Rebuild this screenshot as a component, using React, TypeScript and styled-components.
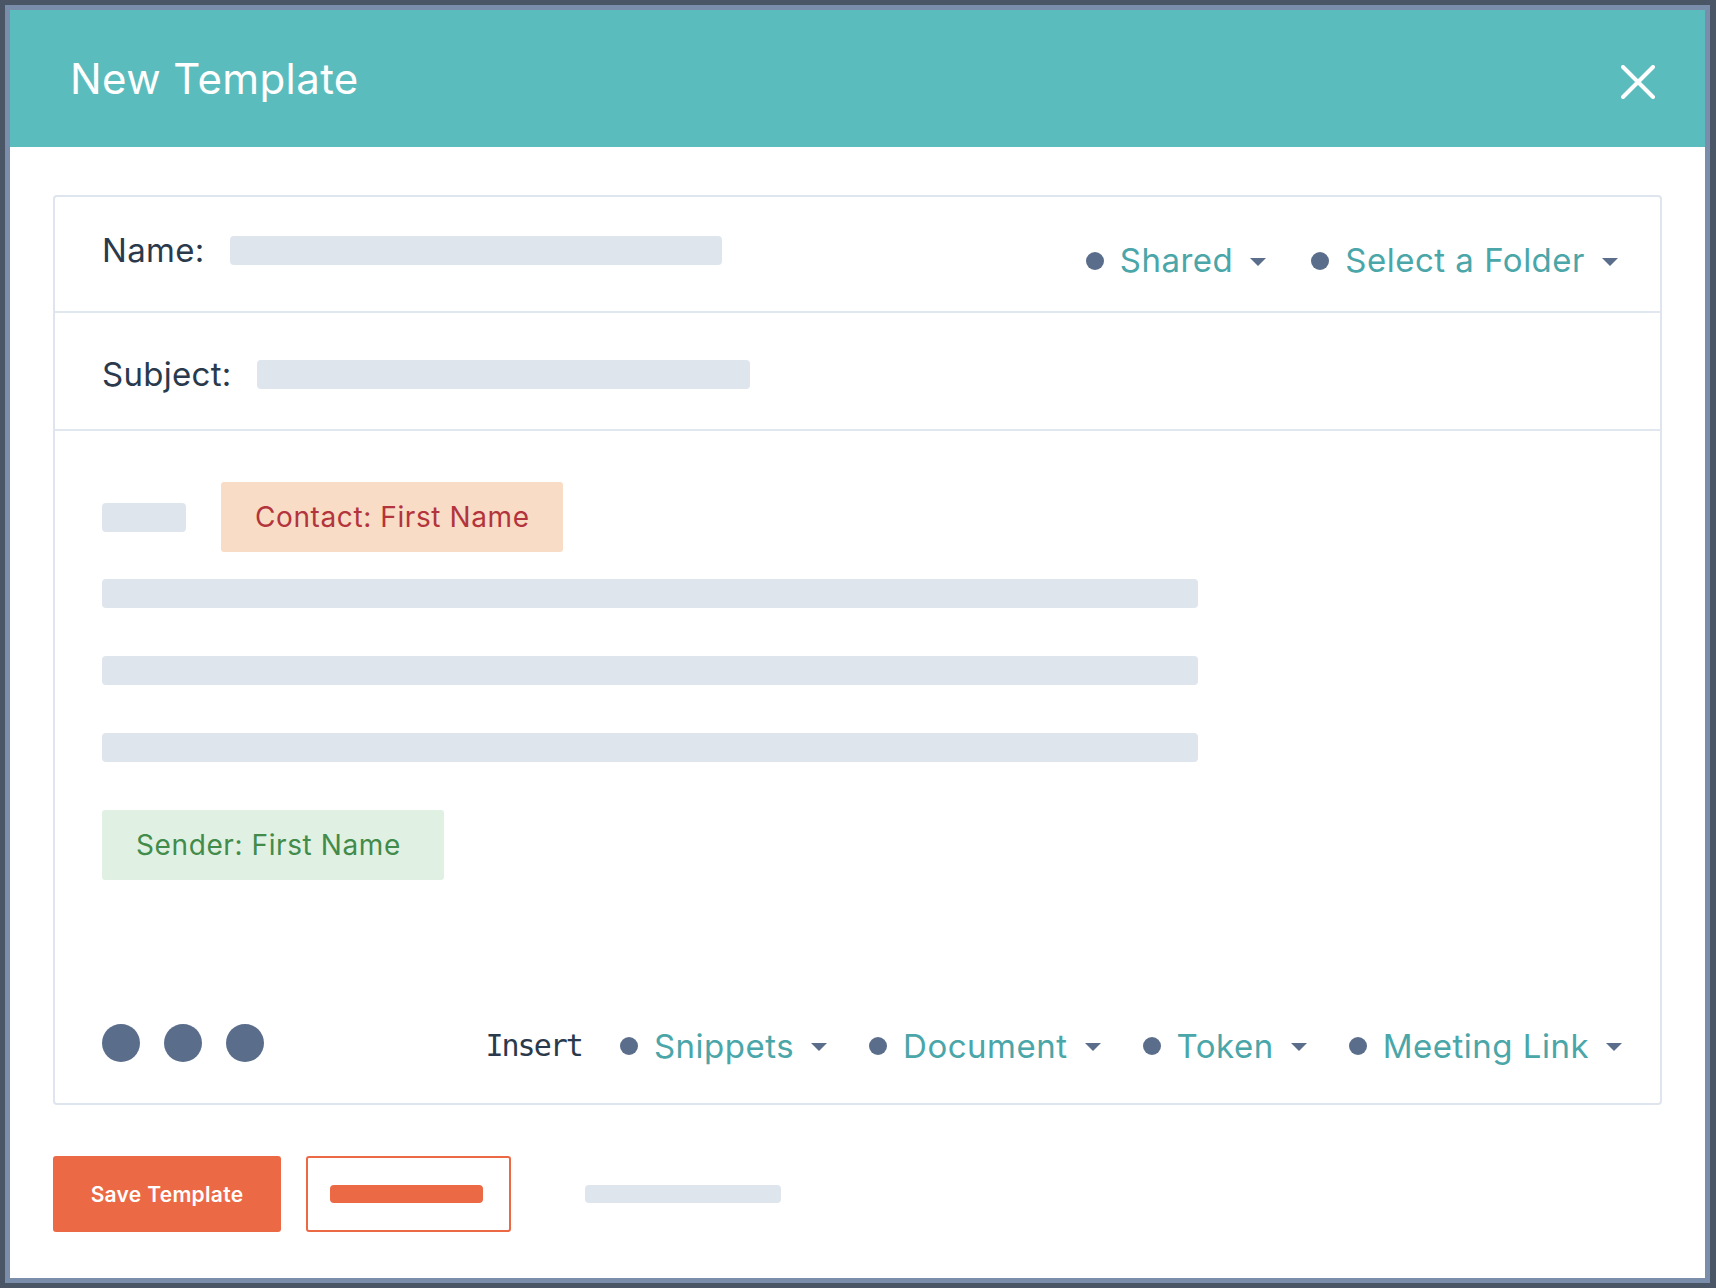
import React from 'react';
import styled, { createGlobalStyle } from 'styled-components';

const GlobalStyle = createGlobalStyle`
  html, body { margin: 0; padding: 0; background: #4a5665; }
  body { font-family: Inter, "Noto Sans", sans-serif; }
  * { box-sizing: border-box; }
`;

const SLATE = '#5a6d8b';
const TEAL_TEXT = '#4aa6a8';
const DARK = '#2a3a4c';
const SKELETON = '#dfe5ed';
const ORANGE = '#ec6945';

const Page = styled.div`
  width: 1716px;
  height: 1288px;
  padding: 5px 6px 5px 5px;
  display: flex;
`;

const Modal = styled.div`
  width: 1705px;
  height: 1278px;
  border: 5px solid #7a8dab;
  background: #ffffff;
  display: flex;
  flex-direction: column;
`;

const Header = styled.header`
  height: 137px;
  flex-shrink: 0;
  background: #5bbcbe;
  display: flex;
  align-items: center;
  justify-content: space-between;
  padding: 0 50px 0 60px;
`;

const Title = styled.h1`
  margin: 0;
  font-size: 42px;
  font-weight: 400;
  color: #ffffff;
  letter-spacing: 0.4px;
`;

const CloseButton = styled.button`
  width: 34px;
  height: 34px;
  padding: 0;
  margin-top: 6px;
  border: none;
  background: transparent;
  display: flex;
  align-items: center;
  justify-content: center;
  cursor: pointer;
`;

const Content = styled.main`
  padding: 48px 43px 0 43px;
  display: flex;
  flex-direction: column;
`;

const Card = styled.section`
  border: 2px solid #dfe5ee;
  border-radius: 4px;
  display: flex;
  flex-direction: column;
`;

const FieldRow = styled.div<{ $height: number; $shift?: number }>`
  height: ${(p) => p.$height}px;
  border-bottom: 2px solid #e1e7ef;
  display: flex;
  align-items: center;
  justify-content: space-between;
  padding: ${(p) => p.$shift || 0}px 42px 0 47px;
`;

const FieldGroup = styled.div<{ $lift?: number }>`
  display: flex;
  align-items: center;
  gap: 25px;
  margin-bottom: ${(p) => p.$lift || 0}px;
`;

const FieldLabel = styled.span`
  font-size: 33px;
  color: ${DARK};
  line-height: 1;
  letter-spacing: 0.3px;
`;

const SkeletonBar = styled.div<{ $w: number; $h?: number; $color?: string }>`
  width: ${(p) => p.$w}px;
  height: ${(p) => p.$h || 29}px;
  border-radius: 4px;
  background: ${(p) => p.$color || SKELETON};
  flex-shrink: 0;
`;

const DropdownGroup = styled.div<{ $drop?: number; $gap: number }>`
  display: flex;
  align-items: center;
  gap: ${(p) => p.$gap}px;
  margin-top: ${(p) => p.$drop || 0}px;
`;

const Dropdown = styled.div`
  display: flex;
  align-items: center;
`;

const Dot = styled.span<{ $size: number }>`
  width: ${(p) => p.$size}px;
  height: ${(p) => p.$size}px;
  border-radius: 50%;
  background: ${SLATE};
  flex-shrink: 0;
`;

const DropdownLabel = styled.span`
  font-size: 33px;
  color: ${TEAL_TEXT};
  line-height: 1;
  letter-spacing: 0.5px;
  margin: 0 17px 0 16px;
`;

const Caret = styled.span`
  width: 0;
  height: 0;
  border-left: 8.5px solid transparent;
  border-right: 8.5px solid transparent;
  border-top: 8px solid ${SLATE};
  margin-top: 2px;
`;

const EditorBody = styled.div`
  padding: 51px 38px 41px 47px;
  display: flex;
  flex-direction: column;
`;

const FirstLine = styled.div`
  display: flex;
  align-items: center;
  gap: 35px;
`;

const Token = styled.span<{ $bg: string; $fg: string }>`
  width: 342px;
  height: 70px;
  padding-left: 34px;
  display: flex;
  align-items: center;
  border-radius: 3px;
  background: ${(p) => p.$bg};
  color: ${(p) => p.$fg};
  font-size: 28px;
  letter-spacing: 0.6px;
`;

const TextLines = styled.div`
  display: flex;
  flex-direction: column;
  gap: 48px;
  margin: 27px 0 48px;
`;

const Toolbar = styled.div`
  margin-top: 143px;
  height: 39px;
  display: flex;
  align-items: center;
  justify-content: space-between;
`;

const FormatDots = styled.div`
  display: flex;
  gap: 24px;
`;

const InsertLabel = styled.span`
  font-family: "DejaVu Sans Mono", monospace;
  font-size: 30px;
  letter-spacing: -2px;
  color: ${DARK};
  margin-right: 38px;
  line-height: 1;
`;

const InsertGroup = styled.div`
  display: flex;
  align-items: center;
  margin-top: 7px;
`;

const Footer = styled.footer`
  margin-top: 51px;
  display: flex;
  align-items: center;
`;

const PrimaryButton = styled.button`
  width: 228px;
  height: 76px;
  border: none;
  border-radius: 3px;
  background: ${ORANGE};
  color: #ffffff;
  font-family: Inter, "Noto Sans", sans-serif;
  font-size: 21px;
  font-weight: 600;
  letter-spacing: 0.3px;
  cursor: pointer;
`;

const SecondaryButton = styled.button`
  width: 205px;
  height: 76px;
  margin-left: 25px;
  border: 2px solid ${ORANGE};
  border-radius: 3px;
  background: #ffffff;
  display: flex;
  align-items: center;
  justify-content: center;
  padding: 0 4px 0 0;
  cursor: pointer;
`;

const TertiarySlot = styled.div`
  margin-left: 74px;
  display: flex;
`;

const headerDropdowns = ['Shared', 'Select a Folder'];
const insertItems = ['Snippets', 'Document', 'Token', 'Meeting Link'];

function DropdownItem({ label }: { label: string }) {
  return (
    <Dropdown>
      <Dot $size={18} />
      <DropdownLabel>{label}</DropdownLabel>
      <Caret />
    </Dropdown>
  );
}

export default function App() {
  return (
    <>
      <GlobalStyle />
      <Page>
        <Modal>
          <Header>
            <Title>New Template</Title>
            <CloseButton aria-label="Close">
              <svg width="34" height="34" viewBox="0 0 34 34">
                <path d="M2 2 L32 32 M32 2 L2 32" stroke="#ffffff" strokeWidth="4" strokeLinecap="round" fill="none" />
              </svg>
            </CloseButton>
          </Header>
          <Content>
            <Card>
              <FieldRow $height={116}>
                <FieldGroup $lift={7}>
                  <FieldLabel>Name:</FieldLabel>
                  <SkeletonBar $w={492} />
                </FieldGroup>
                <DropdownGroup $gap={45} $drop={13}>
                  {headerDropdowns.map((d) => (
                    <DropdownItem key={d} label={d} />
                  ))}
                </DropdownGroup>
              </FieldRow>
              <FieldRow $height={118} $shift={7}>
                <FieldGroup>
                  <FieldLabel>Subject:</FieldLabel>
                  <SkeletonBar $w={493} />
                </FieldGroup>
              </FieldRow>
              <EditorBody>
                <FirstLine>
                  <SkeletonBar $w={84} />
                  <Token $bg="#f8dcc5" $fg="#b3343c">Contact: First Name</Token>
                </FirstLine>
                <TextLines>
                  <SkeletonBar $w={1096} />
                  <SkeletonBar $w={1096} />
                  <SkeletonBar $w={1096} />
                </TextLines>
                <Token $bg="#e0f1e3" $fg="#428b4a">Sender: First Name</Token>
                <Toolbar>
                  <FormatDots>
                    <Dot $size={38} />
                    <Dot $size={38} />
                    <Dot $size={38} />
                  </FormatDots>
                  <InsertGroup>
                    <InsertLabel>Insert</InsertLabel>
                    <DropdownGroup $gap={42}>
                      {insertItems.map((d) => (
                        <DropdownItem key={d} label={d} />
                      ))}
                    </DropdownGroup>
                  </InsertGroup>
                </Toolbar>
              </EditorBody>
            </Card>
            <Footer>
              <PrimaryButton>Save Template</PrimaryButton>
              <SecondaryButton aria-label="Secondary action">
                <SkeletonBar $w={153} $h={18} $color={ORANGE} />
              </SecondaryButton>
              <TertiarySlot>
                <SkeletonBar $w={196} $h={18} />
              </TertiarySlot>
            </Footer>
          </Content>
        </Modal>
      </Page>
    </>
  );
}
